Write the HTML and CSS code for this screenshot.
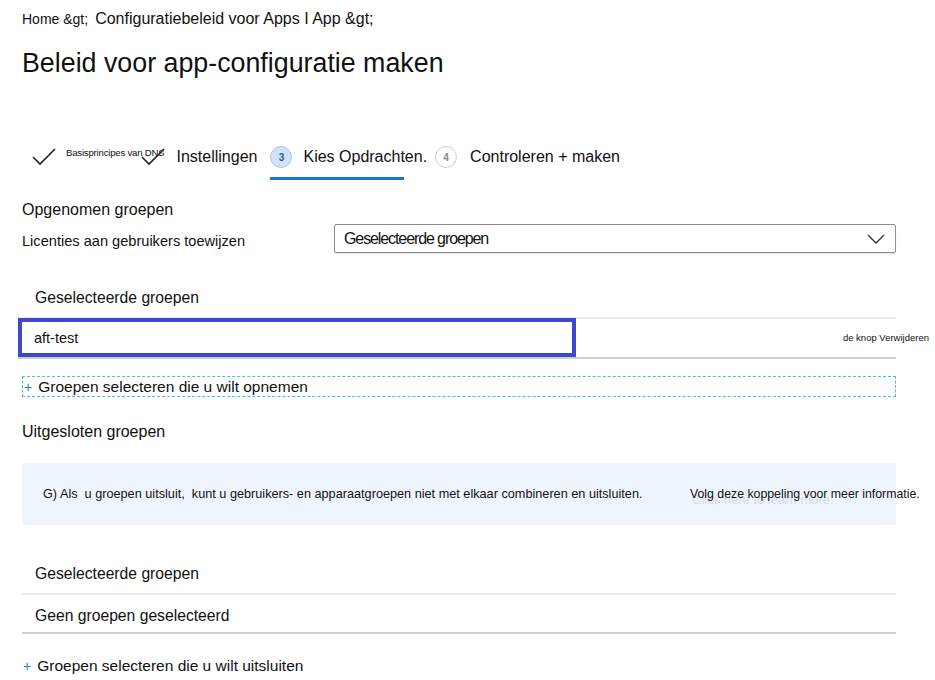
FILE: index.html
```html
<!DOCTYPE html>
<html lang="nl">
<head>
<meta charset="utf-8">
<title>Beleid voor app-configuratie maken</title>
<link rel="stylesheet" href="styles.css">
</head>
<body>
<div class="page">
  <div class="crumbs"><span class="crumb-home">Home &amp;gt;</span><span class="crumb-rest">Configuratiebeleid voor Apps I App &amp;gt;</span></div>
  <h1 class="title">Beleid voor app-configuratie maken</h1>

  <div class="steps">
    <svg class="check check-first" width="24" height="18" viewBox="0 0 24 18"><path d="M1 9 L8 16 L23 1" fill="none" stroke="#222" stroke-width="1.6"/></svg>
    <span class="step-tiny">Basisprincipes van DNS</span>
    <svg class="check check-second" width="24" height="18" viewBox="0 0 24 18"><path d="M1 9 L8 16 L23 1" fill="none" stroke="#222" stroke-width="1.6"/></svg>
    <span class="step-label">Instellingen</span>
    <div class="step step-active">
      <span class="step-num num-active">3</span>
      <span class="step-label">Kies Opdrachten.</span>
    </div>
    <div class="step">
      <span class="step-num num-idle">4</span>
      <span class="step-label">Controleren + maken</span>
    </div>
  </div>

  <div class="section-title">Opgenomen groepen</div>
  <div class="assign-row">
    <span class="assign-label">Licenties aan gebruikers toewijzen</span>
    <div class="dropdown">
      <span class="dropdown-text">Geselecteerde groepen</span>
      <svg width="18" height="10" viewBox="0 0 18 10"><path d="M1 1 L9 9 L17 1" fill="none" stroke="#333" stroke-width="1.3"/></svg>
    </div>
  </div>

  <div class="sub-title">Geselecteerde groepen</div>
  <div class="group-row">
    <div class="group-cell">aft-test</div>
    <div class="remove">de knop Verwijderen</div>
  </div>

  <div class="add-link add-dashed"><span class="plus">+</span><span>Groepen selecteren die u wilt opnemen</span></div>

  <div class="section-title excl">Uitgesloten groepen</div>
  <div class="info">
    <span class="info-text">G) Als&nbsp; u groepen uitsluit,&nbsp; kunt u gebruikers- en apparaatgroepen niet met elkaar combineren en uitsluiten.</span>
    <span class="info-link"><span class="ghost">Click here to learn more.</span><span class="link-text">Volg deze koppeling voor meer informatie.</span></span>
  </div>

  <div class="sub-title sub-excl">Geselecteerde groepen</div>
  <div class="empty-row">Geen groepen geselecteerd</div>
  <div class="add-link add-last"><span class="plus">+</span><span>Groepen selecteren die u wilt uitsluiten</span></div>
</div>
</body>
</html>
```

FILE: styles.css
```css
* { box-sizing: border-box; }
html, body { margin: 0; padding: 0; background: #fff; }
body {
  font-family: "Liberation Sans", Arial, sans-serif;
  color: #111;
}
.page {
  width: 935px;
  padding: 0 0 0 22px;
}
.crumbs {
  height: 38px;
  padding-top: 10px;
  display: flex;
  align-items: baseline;
}
.crumb-home { font-size: 14px; margin-right: 7px; }
.crumb-rest { font-size: 16px; }
.title {
  margin: 10px 0 0 0;
  font-weight: normal;
  font-size: 26.8px;
  line-height: 30px;
  height: 30px;
}
.steps {
  margin-top: 59px;
  height: 48px;
  display: flex;
  align-items: center;
  padding-bottom: 8px;
}
.check-first { margin-left: 10px; margin-right: 10px; }
.step-tiny { font-size: 9.6px; letter-spacing: -0.2px; margin-top: -9px; }
.check-second { margin-left: -24px; margin-right: 12px; }
.step-label { font-size: 16px; }
.step { display: flex; align-items: center; position: relative; height: 40px; }
.step-active { margin-left: 13px; }
.step-active::after {
  content: "";
  position: absolute;
  left: 0;
  bottom: -3px;
  width: 134px;
  height: 3px;
  background: #0f78d4;
}
.step-num {
  width: 22px;
  height: 22px;
  border-radius: 50%;
  display: flex;
  align-items: center;
  justify-content: center;
  font-size: 10px;
  font-weight: bold;
  margin-right: 11px;
}
.num-active { background: #cfe3f9; border: 1px solid #a8c8ef; color: #1f5fa8; }
.num-idle { background: #fff; border: 1px solid #d0d0d0; color: #888; margin-left: 8px; margin-right: 13px; }

.section-title {
  font-size: 16px;
  margin-top: 14px;
  height: 22px;
  line-height: 22px;
}
.assign-row {
  display: flex;
  align-items: center;
  margin-top: 3px;
  width: 874px;
}
.assign-label { font-size: 14.6px; width: 312px; padding-top: 5px; }
.dropdown {
  flex: 1;
  height: 29px;
  border: 1px solid #8c8c8c;
  border-radius: 2px;
  box-shadow: 0 1px 1px rgba(0,0,0,0.12);
  display: flex;
  align-items: center;
  justify-content: space-between;
  padding: 1px 10px 0 9px;
}
.dropdown-text { font-size: 16px; letter-spacing: -1.1px; }
.sub-title {
  font-size: 15.7px;
  padding-left: 13px;
  margin-top: 35px;
  height: 20px;
  line-height: 20px;
}
.group-row {
  margin-top: 9px;
  margin-left: -4px;
  width: 878px;
  height: 42px;
  border-top: 2px solid #ececec;
  border-bottom: 2px solid #cfcfcf;
  display: flex;
  align-items: center;
  justify-content: space-between;
}
.group-cell {
  width: 558px;
  height: 39px;
  border: 4px solid #3f47cf;
  font-size: 14.5px;
  padding-left: 12px;
  display: flex;
  align-items: center;
  margin-top: -1px;
}
.remove { font-size: 9.5px; margin-right: -33px; margin-top: -2px; }
.add-link {
  font-size: 15.5px;
  display: flex;
  align-items: center;
  width: 874px;
}
.add-dashed {
  margin-top: 17px;
  height: 21px;
  border: 1px dashed #3fc0e6;
}
.plus { color: #2a78c8; font-size: 14px; margin: 0 6px 0 1px; }
.excl { margin-top: 24px; }
.info {
  margin-top: 20px;
  width: 874px;
  height: 62px;
  background: #eff5fd;
  border-radius: 2px;
  display: flex;
  align-items: center;
  font-size: 12.7px;
  padding-left: 21px;
}
.info-text { width: 647px; flex-shrink: 0; }
.info-link { position: relative; white-space: nowrap; font-size: 12.3px; flex-shrink: 0; }
.link-text { position: relative; }
.ghost {
  position: absolute;
  left: 2px;
  top: 5px;
  color: #d6dbe2;
  font-size: 13px;
}
.sub-excl { margin-top: 39px; }
.empty-row {
  margin-top: 9px;
  border-top: 2px solid #ececec;
  border-bottom: 2px solid #cfcfcf;
  width: 874px;
  height: 41px;
  padding: 5px 0 0 13px;
  font-size: 15.7px;
  display: flex;
  align-items: center;
}
.add-last { margin-top: 21px; height: 22px; }
```
